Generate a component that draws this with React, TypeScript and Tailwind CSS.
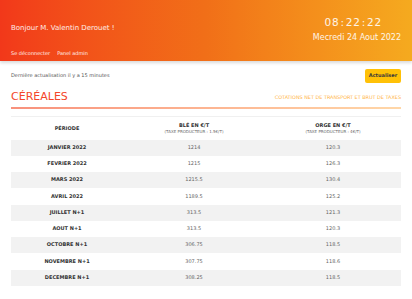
const rows = [
  { periode: "JANVIER 2022", ble: "1214", orge: "120.3" },
  { periode: "FEVRIER 2022", ble: "1215", orge: "126.3" },
  { periode: "MARS 2022", ble: "1215.5", orge: "130.4" },
  { periode: "AVRIL 2022", ble: "1189.5", orge: "125.2" },
  { periode: "JUILLET N+1", ble: "313.5", orge: "121.3" },
  { periode: "AOUT N+1", ble: "313.5", orge: "120.3" },
  { periode: "OCTOBRE N+1", ble: "306.75", orge: "118.5" },
  { periode: "NOVEMBRE N+1", ble: "307.75", orge: "118.6" },
  { periode: "DECEMBRE N+1", ble: "308.25", orge: "118.5" },
];

const App = () => {
  return (
    <div className="min-h-[299px] w-[412px] overflow-hidden bg-white font-['DejaVu_Sans',sans-serif]">
      {/* Header */}
      <header className="flex h-[61px] justify-between bg-gradient-to-r from-[#f2381a] via-[#f16f18] to-[#f5aa1f] px-[11px] shadow-[0_2px_3px_rgba(0,0,0,0.15)]">
        <div className="flex flex-col pt-[24px]">
          <h1 className="text-[7px] leading-[9px] text-white/90">Bonjour M. Valentin Derouet !</h1>
          <div className="mt-[17px] flex gap-[7px] text-[5px] leading-[7px] text-white/90">
            <span>Se déconnecter</span>
            <span>Panel admin</span>
          </div>
        </div>
        <div className="flex flex-col items-end pt-[16px] text-white/90">
          <div className="mr-[19px] text-[10.5px] leading-[13px] tracking-[0.8px]">
            08<span className="mx-[1px]">:</span>22<span className="mx-[1px]">:</span>22
          </div>
          <div className="mt-[4px] text-[8px] leading-[10px]">Mecredi 24 Aout 2022</div>
        </div>
      </header>

      <div className="px-[11px]">
        {/* Refresh bar */}
        <div className="mt-[8px] flex h-[14px] items-center justify-between">
          <span className="text-[5px] text-[#555]">Dernière actualisation il y a 15 minutes</span>
          <button className="h-[14px] w-[36px] rounded-[2px] bg-[#ffc107] text-[5px] font-bold text-[#3a3a3a]">
            Actualiser
          </button>
        </div>

        {/* Title */}
        <div className="mt-[7px] flex items-end justify-between">
          <h2 className="text-[11px] leading-[14px] text-[#f4462a]">CÉRÉALES</h2>
          <span className="mb-[3px] text-[4.9px] text-[#ffb547]">
            COTATIONS NET DE TRANSPORT ET BRUT DE TAXES
          </span>
        </div>
        <div className="mt-[3px] h-[2px] bg-gradient-to-r from-[#f8917c] to-[#ffd7a8]" />

        {/* Table */}
        <table className="mt-[7px] w-full border-collapse border-t border-[#f0f0f0]">
          <thead>
            <tr className="h-[23px]">
              <th className="w-[112px] text-[5px] font-bold text-[#333]">PÉRIODE</th>
              <th className="w-[142px] text-[#333]">
                <div className="text-[5px] font-bold leading-[7px]">BLÉ EN €/T</div>
                <div className="text-[4px] font-normal leading-[6px] text-[#666]">
                  (TAXE PRODUCTEUR : 1.5€/T)
                </div>
              </th>
              <th className="text-[#333]">
                <div className="text-[5px] font-bold leading-[7px]">ORGE EN €/T</div>
                <div className="text-[4px] font-normal leading-[6px] text-[#666]">
                  (TAXE PRODUCTEUR : 4€/T)
                </div>
              </th>
            </tr>
          </thead>
          <tbody>
            {rows.map((r, i) => (
              <tr key={r.periode} className={`h-[16.25px] ${i % 2 === 0 ? "bg-[#f2f2f2]" : "bg-white"}`}>
                <td className="text-center text-[5px] font-bold text-[#333]">{r.periode}</td>
                <td className="text-center text-[5px] text-[#666]">{r.ble}</td>
                <td className="text-center text-[5px] text-[#666]">{r.orge}</td>
              </tr>
            ))}
          </tbody>
        </table>
      </div>
    </div>
  );
};

export default App;
